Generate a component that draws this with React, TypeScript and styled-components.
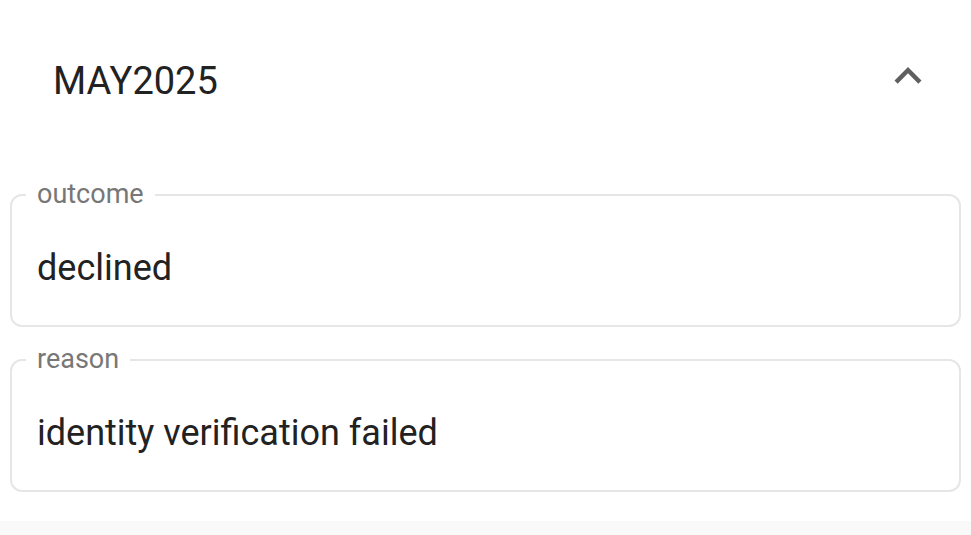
import React from "react";
import styled, { createGlobalStyle } from "styled-components";

const GlobalStyle = createGlobalStyle`
    html, body {
        margin: 0;
        padding: 0;
        background-color: #f9f9f9;
        font-family: Roboto, "Liberation Sans", Arial, sans-serif;
    }
`;

const Card = styled.section`
    background-color: #fff;
    box-shadow: 0 3px 3px rgba(0, 0, 0, 0.3), 0 -1px 2px rgba(0, 0, 0, 0.04);
    padding: 0 10px 29px;
    display: flex;
    flex-direction: column;
    gap: 19px;
`;

const Header = styled.div`
    height: 162px;
    display: flex;
    align-items: center;
    justify-content: space-between;
    padding: 0 26px 0 43px;
`;

const Title = styled.h2`
    margin: 0;
    font-size: 38px;
    line-height: 44px;
    font-weight: 400;
    color: #222;
`;

const IconButton = styled.button`
    border: none;
    background: none;
    padding: 0;
    width: 54px;
    height: 54px;
    margin-top: -10px;
    color: #5f5f5f;
    display: flex;
    align-items: center;
    justify-content: center;
    cursor: pointer;
`;

const Field = styled.fieldset`
    margin: 0;
    padding: 0 0 0 25px;
    border: 2px solid #e6e6e6;
    border-radius: 12px;
    min-width: 0;
`;

const Label = styled.legend`
    margin-left: -11px;
    padding: 0 11px;
    font-size: 27px;
    line-height: 27px;
    color: #777;
`;

const Value = styled.div`
    padding: 40px 0 37px;
    font-size: 36px;
    line-height: 40px;
    color: #222;
`;

const ExpandLess = () => (
    <svg width="54" height="54" viewBox="0 0 24 24" fill="currentColor">
        <path d="m12 8-6 6 1.41 1.41L12 10.83l4.59 4.58L18 14z" />
    </svg>
);

const rows = [
    { label: "outcome", value: "declined" },
    { label: "reason", value: "identity verification failed" },
];

export default function App() {
    return (
        <>
            <GlobalStyle />
            <Card>
                <Header>
                    <Title>MAY2025</Title>
                    <IconButton aria-label="collapse">
                        <ExpandLess />
                    </IconButton>
                </Header>
                {rows.map(row => (
                    <Field key={row.label}>
                        <Label>{row.label}</Label>
                        <Value>{row.value}</Value>
                    </Field>
                ))}
            </Card>
        </>
    );
}
